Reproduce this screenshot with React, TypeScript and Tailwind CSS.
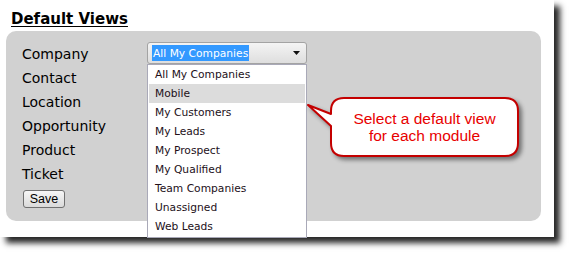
import React from "react";

const labels = ["Company", "Contact", "Location", "Opportunity", "Product", "Ticket"];

const views = [
  "All My Companies",
  "Mobile",
  "My Customers",
  "My Leads",
  "My Prospect",
  "My Qualified",
  "Team Companies",
  "Unassigned",
  "Web Leads",
];

const tahoma = "font-['DejaVu_Sans',sans-serif]";

function ViewSelect() {
  return (
    <div className="relative w-[160px]">
      <div className="flex h-[22px] items-center justify-between rounded-[3px] border border-[#a3a3a3] bg-gradient-to-b from-[#f4f4f4] to-[#dedede] pl-[4px] pr-[6px]">
        <span className={`${tahoma} bg-[#3399ff] px-[1px] pt-[1px] text-[10.7px] leading-[15px] text-white`}>
          All My Companies
        </span>
        <svg width="7" height="4" viewBox="0 0 7 4">
          <path d="M0 0H7L3.5 4Z" fill="#111" />
        </svg>
      </div>
      <ul className="absolute left-0 top-full z-10 w-[160px] border border-[#a9a9b8] bg-white p-[1px] pt-0">
        {views.map((v) => (
          <li
            key={v}
            className={`${tahoma} flex h-[19px] items-center pl-[6px] pt-[2px] text-[10.7px] text-[#231019] ${
              v === "Mobile" ? "bg-[#dcdcdc]" : ""
            }`}
          >
            {v}
          </li>
        ))}
      </ul>
    </div>
  );
}

function Callout() {
  return (
    <div className="absolute left-[300px] top-[90px] z-20 h-[80px] w-[232px]">
      <svg width="232" height="80" viewBox="0 0 232 80" className="absolute inset-0 drop-shadow-[3px_3px_2px_rgba(0,0,0,0.45)]">
        <path
          d="M44 8H205Q218 8 218 21V53Q218 66 205 66H44Q31 66 31 53V36L8 15L31 24V21Q31 8 44 8Z"
          fill="#fff"
          stroke="#c40000"
          strokeWidth="2"
          strokeLinejoin="round"
        />
      </svg>
      <div className="absolute left-[31px] top-[20px] w-[187px] text-center font-['Liberation_Sans',Arial,sans-serif] text-[15.5px] leading-[17px] text-[#e80000]">
        Select a default view
        <br />
        for each module
      </div>
    </div>
  );
}

export default function App() {
  return (
    <div className="relative h-[253px] w-[569px] bg-white">
      <div className="h-[237px] w-[554px] bg-white shadow-[6px_6px_6px_rgba(0,0,0,0.85)]">
        <div className="h-[31px] pl-[11px] pt-[10px]">
          <h1 className={`${tahoma} text-[15px] font-bold leading-[18px] text-black underline underline-offset-[2px]`}>
            Default Views
          </h1>
        </div>
        <div className="ml-[6px] h-[190px] w-[535px] rounded-[10px] bg-[#d1d1d1] pl-[16px] pt-[10px]">
          {labels.map((label, i) => (
            <div key={label} className="flex h-6 items-center">
              <span className={`${tahoma} w-[125px] pt-[2px] text-[14px] leading-[22px] text-black`}>
                {label}
              </span>
              {i === 0 && <ViewSelect />}
            </div>
          ))}
          <button className="ml-[1px] mt-[4px] h-[18px] w-[42px] rounded-[3px] border border-[#707070] bg-gradient-to-b from-[#f6f6f6] to-[#dadada] font-['Liberation_Sans',Arial,sans-serif] text-[12.5px] leading-[16px] text-black">
            Save
          </button>
        </div>
      </div>
      <Callout />
    </div>
  );
}
